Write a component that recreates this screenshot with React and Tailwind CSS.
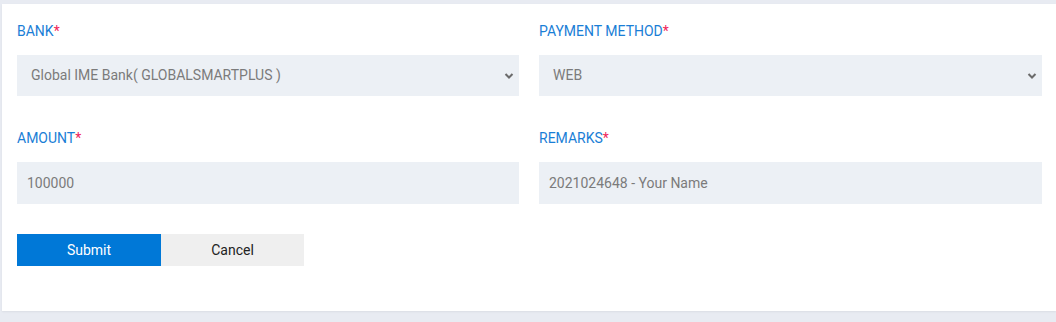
import React, { useState } from "react";

function Label({ children }) {
  return (
    <label className="block text-[14px] leading-[20px] text-[#1a7ed6] mb-[14px]">
      {children}
      <span className="text-[#f0245a]">*</span>
    </label>
  );
}

function Chevron() {
  return (
    <svg
      className="pointer-events-none absolute right-[5px] top-1/2 -translate-y-1/2"
      width="10"
      height="7"
      viewBox="0 0 10 7"
      fill="none"
    >
      <path d="M1.5 1.5 L5 5 L8.5 1.5" stroke="#6b6b6b" strokeWidth="2" />
    </svg>
  );
}

function SelectField({ label, value, options, onChange }) {
  return (
    <div>
      <Label>{label}</Label>
      <div className="relative">
        <select
          value={value}
          onChange={(e) => onChange(e.target.value)}
          className="appearance-none w-full h-[41px] bg-[#ecf0f5] pl-[14px] pr-8 text-[14px] text-[#7b7b7b] outline-none"
        >
          {options.map((o) => (
            <option key={o}>{o}</option>
          ))}
        </select>
        <Chevron />
      </div>
    </div>
  );
}

function TextField({ label, value, onChange }) {
  return (
    <div>
      <Label>{label}</Label>
      <input
        value={value}
        onChange={(e) => onChange(e.target.value)}
        className="w-full h-[42px] bg-[#ecf0f5] px-[10px] text-[14px] text-[#7b7b7b] outline-none"
      />
    </div>
  );
}

export default function App() {
  const [bank, setBank] = useState("Global IME Bank( GLOBALSMARTPLUS )");
  const [method, setMethod] = useState("WEB");
  const [amount, setAmount] = useState("100000");
  const [remarks, setRemarks] = useState("2021024648 - Your Name");

  return (
    <div className="min-h-screen bg-[#e8ebf2] pt-[4px] pl-[2px] font-['Roboto',sans-serif]">
      <div className="bg-white h-[307px] pt-[17px] pl-[15px] pr-[14px] shadow-[0_1px_2px_rgba(0,0,0,0.06)]">
        <div className="grid grid-cols-[502px_1fr] gap-x-5 gap-y-[32px]">
          <SelectField
            label="BANK"
            value={bank}
            onChange={setBank}
            options={["Global IME Bank( GLOBALSMARTPLUS )", "Nabil Bank", "NIC Asia Bank"]}
          />
          <SelectField
            label="PAYMENT METHOD"
            value={method}
            onChange={setMethod}
            options={["WEB", "MOBILE"]}
          />
          <TextField label="AMOUNT" value={amount} onChange={setAmount} />
          <TextField label="REMARKS" value={remarks} onChange={setRemarks} />
        </div>
        <div className="flex mt-[30px]">
          <button className="w-[144px] h-[32px] bg-[#0078d7] text-white text-[14px]">
            Submit
          </button>
          <button className="w-[143px] h-[32px] bg-[#efefef] text-[#222] text-[14px]">
            Cancel
          </button>
        </div>
      </div>
    </div>
  );
}
